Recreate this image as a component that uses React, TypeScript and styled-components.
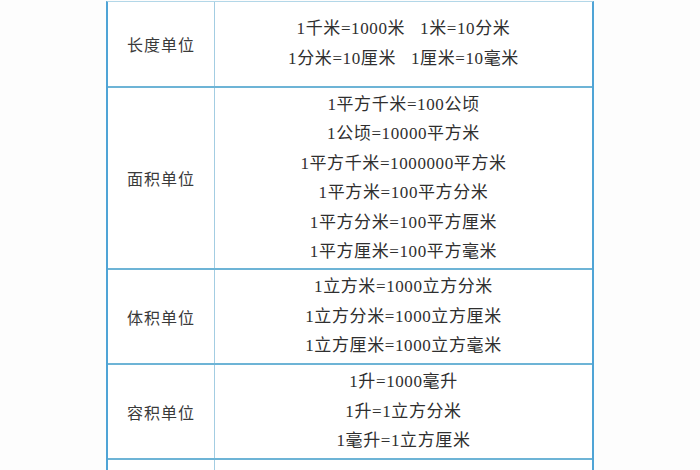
import React from "react";
import styled, { createGlobalStyle } from "styled-components";

const Global = createGlobalStyle`
  html, body {
    margin: 0;
    padding: 0;
    background: #fdfdfd;
  }
  body {
    font-family: "Liberation Serif", "Noto Sans CJK SC", serif;
    color: #333;
  }
`;

const Page = styled.div`
  width: 700px;
  height: 470px;
  overflow: hidden;
  padding-top: 1px;
  box-sizing: border-box;
`;

const Sheet = styled.div`
  width: 488px;
  margin: 0 auto;
  border-left: 2px solid #4fa4d6;
  border-right: 2px solid #4fa4d6;
  border-top: 1px solid #b3d7e8;
  box-sizing: border-box;
  background: #fff;
`;

const Row = styled.div<{ $h: number }>`
  display: grid;
  grid-template-columns: 107px 1fr;
  height: ${(p) => p.$h}px;
  border-bottom: 2px solid #6db4d6;
  box-sizing: border-box;
`;

const Label = styled.div`
  display: flex;
  align-items: center;
  justify-content: center;
  border-right: 1px solid #a3cde2;
  font-size: 16px;
  letter-spacing: 1px;
  color: #3a3a3a;
`;

const Values = styled.div<{ $lh: number }>`
  display: flex;
  flex-direction: column;
  align-items: center;
  justify-content: center;
  font-size: 17px;
  line-height: ${(p) => p.$lh}px;
  letter-spacing: 0.6px;
  color: #2f2f2f;
`;

const Line = styled.div<{ $gap: number }>`
  display: flex;
  gap: ${(p) => p.$gap}px;
  white-space: nowrap;
`;

type Group = { label: string; h: number; lh: number; lines: string[][] };

const groups: Group[] = [
  {
    label: "长度单位",
    h: 86,
    lh: 30,
    lines: [
      ["1千米=1000米", "1米=10分米"],
      ["1分米=10厘米", "1厘米=10毫米"],
    ],
  },
  {
    label: "面积单位",
    h: 182,
    lh: 29.5,
    lines: [
      ["1平方千米=100公顷"],
      ["1公顷=10000平方米"],
      ["1平方千米=1000000平方米"],
      ["1平方米=100平方分米"],
      ["1平方分米=100平方厘米"],
      ["1平方厘米=100平方毫米"],
    ],
  },
  {
    label: "体积单位",
    h: 95,
    lh: 29.5,
    lines: [
      ["1立方米=1000立方分米"],
      ["1立方分米=1000立方厘米"],
      ["1立方厘米=1000立方毫米"],
    ],
  },
  {
    label: "容积单位",
    h: 95,
    lh: 29.5,
    lines: [["1升=1000毫升"], ["1升=1立方分米"], ["1毫升=1立方厘米"]],
  },
];

export default function App() {
  return (
    <Page>
      <Global />
      <Sheet>
        {groups.map((g) => (
          <Row key={g.label} $h={g.h}>
            <Label>{g.label}</Label>
            <Values $lh={g.lh}>
              {g.lines.map((parts, i) => (
                <Line key={i} $gap={15}>
                  {parts.map((t) => (
                    <span key={t}>{t}</span>
                  ))}
                </Line>
              ))}
            </Values>
          </Row>
        ))}
        <Row $h={40}>
          <Label />
          <Values $lh={29.5} />
        </Row>
      </Sheet>
    </Page>
  );
}
